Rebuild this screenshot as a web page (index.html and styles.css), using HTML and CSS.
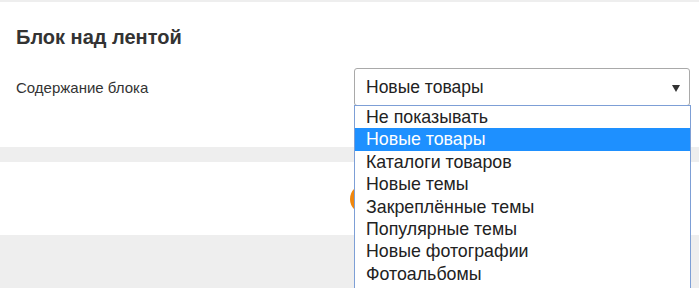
FILE: index.html
```html
<!DOCTYPE html>
<html lang="ru">
<head>
    <meta charset="UTF-8">
    <title>Блок над лентой</title>
    <link rel="stylesheet" href="styles.css">
</head>
<body>
    <!-- Настройки блока -->
    <div class="panel">
        <h2 class="panel-title">Блок над лентой</h2>
        <div class="form-row">
            <label class="form-label" for="block">Содержание блока</label>
            <div class="select-wrap">
                <div class="select" id="block">
                    <span>Новые товары</span>
                    <span class="arrow"></span>
                </div>
                <ul class="dropdown">
                    <li>Не показывать</li>
                    <li class="active">Новые товары</li>
                    <li>Каталоги товаров</li>
                    <li>Новые темы</li>
                    <li>Закреплённые темы</li>
                    <li>Популярные темы</li>
                    <li>Новые фотографии</li>
                    <li>Фотоальбомы</li>
                </ul>
            </div>
        </div>
    </div>

    <!-- Кнопка под списком -->
    <div class="panel-actions">
        <button class="btn-save" aria-label="Сохранить"></button>
    </div>
</body>
</html>
```

FILE: styles.css
```css
/* Общие стили */
body {
    margin: 0;
    padding-top: 2px;
    background-color: #eeeeee;
    font-family: "Liberation Sans", Arial, sans-serif;
    color: #333333;
    height: 286px;
    overflow: hidden;
}

.panel {
    background: #ffffff;
    height: 145px;
    padding: 0 9px 0 16px;
    box-sizing: border-box;
    margin-bottom: 15px;
}

.panel-title {
    margin: 0;
    padding-top: 24px;
    font-size: 20px;
    font-weight: bold;
    line-height: 22px;
}

.form-row {
    display: flex;
    align-items: center;
    margin-top: 20px;
}

.form-label {
    font-size: 15px;
    width: 338px;
}

.select-wrap {
    position: relative;
    flex: 1;
}

.select {
    height: 38px;
    border: 1px solid #a9a9a9;
    border-radius: 3px;
    box-sizing: border-box;
    display: flex;
    align-items: center;
    justify-content: space-between;
    padding: 0 9px 0 11px;
    font-size: 17.5px;
    color: #222222;
}

.arrow {
    width: 0;
    height: 0;
    border-left: 4px solid transparent;
    border-right: 4px solid transparent;
    border-top: 7px solid #333333;
    margin-top: 2px;
}

.dropdown {
    position: absolute;
    top: 37px;
    left: 0;
    right: -1px;
    margin: 0;
    padding: 0 0 3px;
    list-style: none;
    background: #ffffff;
    border: 1px solid #7d9fd6;
    font-size: 17.8px;
    color: #222222;
    z-index: 5;
}

.dropdown li {
    height: 22.4px;
    line-height: 22.4px;
    padding-left: 11px;
}

.dropdown li.active {
    background: #1e90ff;
    color: #ffffff;
}

.panel-actions {
    background: #ffffff;
    height: 73px;
    display: flex;
    align-items: center;
    padding-left: 350px;
}

.btn-save {
    width: 110px;
    height: 30px;
    border: none;
    border-radius: 15px;
    background: #f0870e;
}
```
